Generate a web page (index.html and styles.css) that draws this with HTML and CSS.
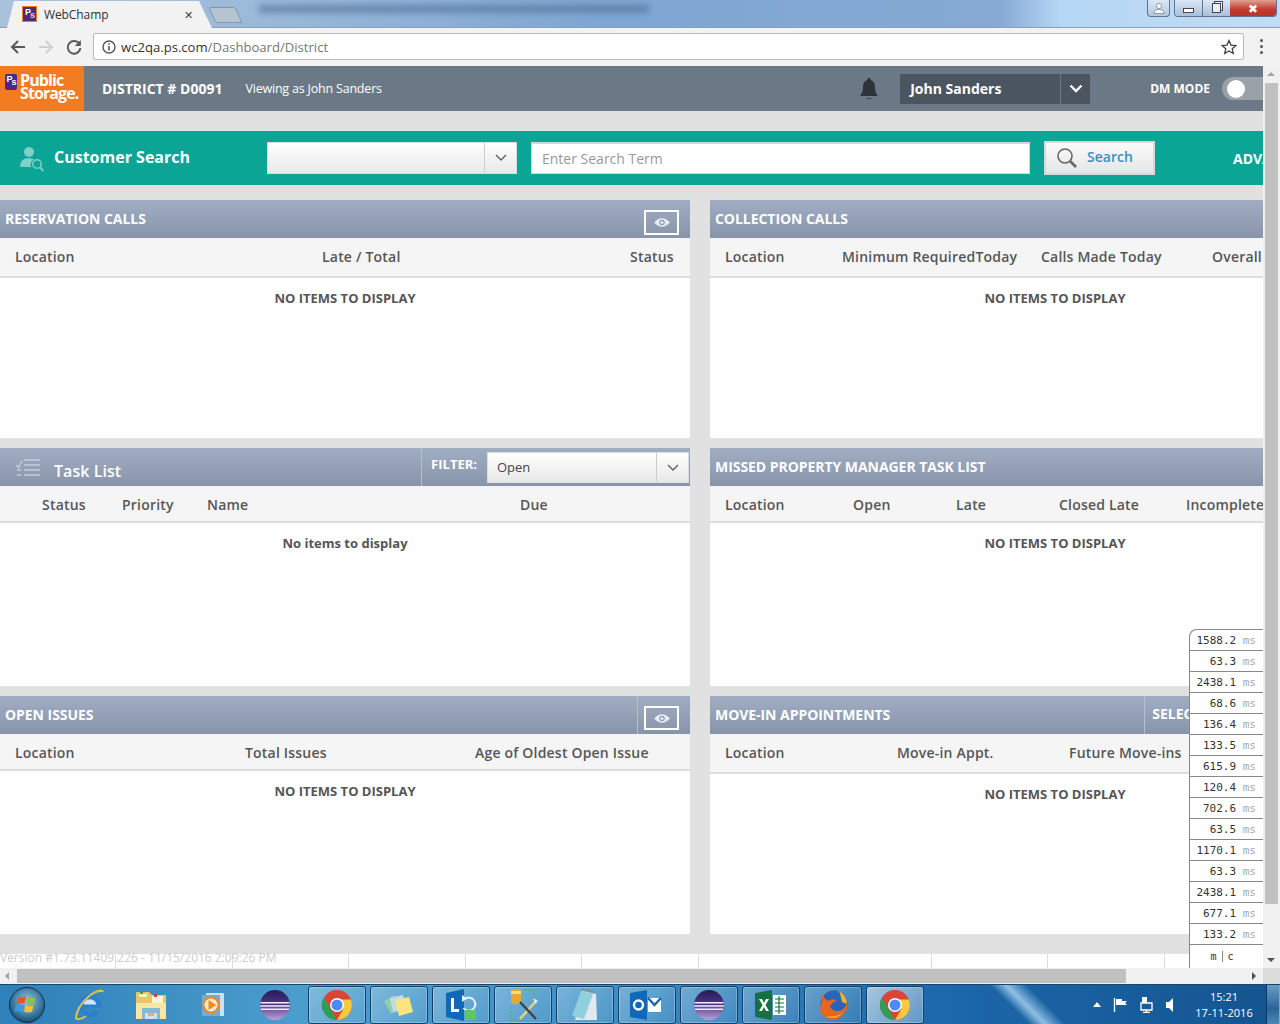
FILE: index.html
```html
<!DOCTYPE html>
<html lang="en">
<head>
    <meta charset="utf-8" />
    <title>WebChamp</title>
    <link rel="stylesheet" href="styles.css">
</head>
<body>
    <svg class="defs" width="0" height="0">
        <defs>
            <linearGradient id="gr-eclipse" x1="0" y1="0" x2="0" y2="1">
                <stop offset="0" stop-color="#2a1a55" />
                <stop offset=".45" stop-color="#4a3285" />
                <stop offset="1" stop-color="#b9a3d8" />
            </linearGradient>
            <radialGradient id="gr-orb" cx=".5" cy=".4" r=".65">
                <stop offset="0" stop-color="#9fc8de" />
                <stop offset=".7" stop-color="#2f6f98" />
                <stop offset="1" stop-color="#123c5c" />
            </radialGradient>
        </defs>
        <symbol id="ic-chrome" viewBox="0 0 32 32">
            <circle cx="16" cy="16" r="15" fill="#db4437" />
            <path d="M3 8.500 L10 20.500 L16 31 A15 15 0 0 1 3 8.500Z" fill="#2f9e56" />
            <path d="M29.900 10.500 A15 15 0 0 1 16 31 L22.500 19.700 L16 10.500Z" fill="#fbc93e" />
            <circle cx="16" cy="16" r="7" fill="#fff" />
            <circle cx="16" cy="16" r="5.500" fill="#4c8bf5" />
        </symbol>
        <symbol id="ic-eclipse" viewBox="0 0 32 32">
            <circle cx="16" cy="16" r="15" fill="url(#gr-eclipse)" />
            <path d="M1.500 13h29v1.400h-29zM1.200 16.300h29.600v1.400H1.200zM2 19.600h28V21H2z" fill="#f3eef8" />
        </symbol>
    </svg>

    <div class="titlebar">
        <div class="tab">
            <span class="fav">P<i>s</i></span>
            <span class="tab_name">WebChamp</span>
            <span class="tab_x">&#x2715;</span>
        </div>
        <div class="tab_new"></div>
        <div class="title_blur"></div>
        <div class="win_user">
            <svg width="12" height="11" viewBox="0 0 12 11"><circle cx="6" cy="3" r="2.600" fill="#fff" stroke="#567" stroke-width=".6" /><path d="M1 10.500q0-4 5-4t5 4Z" fill="#fff" stroke="#567" stroke-width=".6" /></svg>
        </div>
        <div class="win_btns">
            <div class="win_btn win_min"><span></span></div>
            <div class="win_btn win_max"><span></span></div>
            <div class="win_btn win_close">&#x2716;</div>
        </div>
    </div>

    <div class="toolbar">
        <svg class="nav" width="18" height="18" viewBox="0 0 18 18"><path d="M16 9H3M9 3L3 9l6 6" fill="none" stroke="#5a5a5a" stroke-width="2" /></svg>
        <svg class="nav" width="18" height="18" viewBox="0 0 18 18"><path d="M2 9h13M9 3l6 6-6 6" fill="none" stroke="#cfcfcf" stroke-width="2" /></svg>
        <svg class="nav" width="18" height="18" viewBox="0 0 18 18"><path d="M14.500 6.200A6.300 6.300 0 1 0 15.300 10" fill="none" stroke="#5a5a5a" stroke-width="2" /><path d="M15.800 2v6h-6z" fill="#5a5a5a" /></svg>
        <div class="omnibox">
            <svg width="14" height="14" viewBox="0 0 14 14"><circle cx="7" cy="7" r="6" fill="none" stroke="#555" stroke-width="1.400" /><path d="M7 6v4.500M7 3.300v1.500" stroke="#555" stroke-width="1.600" /></svg>
            <span class="url">wc2qa.ps.com<span class="url_path">/Dashboard/District</span></span>
            <svg class="star" width="16" height="16" viewBox="0 0 16 16"><path d="M8 1.500l2 4.600 4.900.4-3.700 3.200 1.100 4.800L8 12l-4.300 2.500 1.100-4.800L1.100 6.500 6 6.100Z" fill="none" stroke="#444" stroke-width="1.300" /></svg>
        </div>
        <div class="dots"><i></i><i></i><i></i></div>
    </div>

    <div class="viewport">
        <div class="page">
            <div class="topbar">
                <div class="logo">
                    <span class="logo_ps">P<i>s</i></span>
                    <span class="logo_text">Public<br />Storage.</span>
                </div>
                <span class="district">DISTRICT # D0091</span>
                <span class="viewing">Viewing as John Sanders</span>
                <svg class="bell" width="20" height="24" viewBox="0 0 20 24"><path d="M10 1a1.600 1.600 0 0 1 1.600 2C15 4 16 7 16 11c0 4 1.500 6 3 8H1c1.500-2 3-4 3-8 0-4 1-7 4.400-8A1.600 1.600 0 0 1 10 1Z" fill="#2d3338" /><path d="M7 21h6q-3 2-6 0Z" fill="#2d3338" /></svg>
                <div class="user_menu">
                    <span class="user_name">John Sanders</span>
                    <span class="user_arrow"><svg width="14" height="9" viewBox="0 0 14 9"><path d="M1.500 1.500L7 7l5.500-5.500" fill="none" stroke="#fff" stroke-width="2.400" /></svg></span>
                </div>
                <span class="dm_mode">DM MODE</span>
                <div class="toggle"><span></span></div>
            </div>

            <div class="search_bar">
                <svg class="search_icon" width="25" height="26" viewBox="0 0 25 26"><circle cx="9" cy="6" r="5" fill="#7fd0c6" /><path d="M0 21q0-9 9-9 3 0 5 1.500A6 6 0 0 0 11 21Z" fill="#7fd0c6" /><circle cx="17" cy="18" r="4.300" fill="none" stroke="#7fd0c6" stroke-width="1.500" /><path d="M20 21.500l3.500 3.500" stroke="#7fd0c6" stroke-width="2" /></svg>
                <span class="search_title">Customer Search</span>
                <div class="select search_select">
                    <span class="select_val"></span>
                    <span class="select_arrow"><svg width="12" height="8" viewBox="0 0 12 8"><path d="M1 1l5 5 5-5" fill="none" stroke="#666" stroke-width="1.500" /></svg></span>
                </div>
                <div class="search_input">Enter Search Term</div>
                <div class="search_btn">
                    <svg width="22" height="22" viewBox="0 0 22 22"><circle cx="9" cy="9" r="7" fill="none" stroke="#666" stroke-width="1.600" /><path d="M14 14l6 6" stroke="#666" stroke-width="2.600" /></svg>
                    <span>Search</span>
                </div>
                <span class="adv">ADVANCED SEARCH</span>
            </div>

            <div class="panels">
                <section class="panel">
                    <div class="panel_head">
                        <span class="panel_title">RESERVATION CALLS</span>
                        <div class="eye_box"><svg width="16" height="11" viewBox="0 0 16 11"><path d="M0 5.500Q8-3 16 5.500 8 14 0 5.500Z" fill="#e8ecf2" /><circle cx="8" cy="5.500" r="2.800" fill="#8f9cb2" /><circle cx="8" cy="5.500" r="1.500" fill="#e8ecf2" /></svg></div>
                    </div>
                    <div class="cols cols_res"><span>Location</span><span>Late / Total</span><span>Status</span></div>
                    <div class="empty">NO ITEMS TO DISPLAY</div>
                </section>

                <section class="panel">
                    <div class="panel_head"><span class="panel_title">COLLECTION CALLS</span></div>
                    <div class="cols cols_coll"><span>Location</span><span>Minimum RequiredToday</span><span>Calls Made Today</span><span>Overall</span></div>
                    <div class="empty">NO ITEMS TO DISPLAY</div>
                </section>

                <section class="panel">
                    <div class="panel_head">
                        <svg class="task_icon" width="24" height="18" viewBox="0 0 24 18"><path d="M8 2h16M8 7h16M8 12h16M8 17h16" stroke="#c5cedb" stroke-width="1.400" /><path d="M0 7l2.500 2.500L6 3" fill="none" stroke="#c5cedb" stroke-width="1.400" /><path d="M1 12h4M1 17h4" stroke="#c5cedb" stroke-width="1.400" /></svg>
                        <span class="task_title">Task List</span>
                        <div class="filter">
                            <span class="filter_label">FILTER:</span>
                            <div class="select filter_select">
                                <span class="select_val">Open</span>
                                <span class="select_arrow"><svg width="12" height="8" viewBox="0 0 12 8"><path d="M1 1l5 5 5-5" fill="none" stroke="#666" stroke-width="1.500" /></svg></span>
                            </div>
                        </div>
                    </div>
                    <div class="cols cols_task short"><span>Status</span><span>Priority</span><span>Name</span><span>Due</span></div>
                    <div class="empty">No items to display</div>
                </section>

                <section class="panel">
                    <div class="panel_head"><span class="panel_title">MISSED PROPERTY MANAGER TASK LIST</span></div>
                    <div class="cols cols_missed short"><span>Location</span><span>Open</span><span>Late</span><span>Closed Late</span><span>Incomplete</span></div>
                    <div class="empty">NO ITEMS TO DISPLAY</div>
                </section>

                <section class="panel">
                    <div class="panel_head">
                        <span class="panel_title">OPEN ISSUES</span>
                        <div class="eye_sep">
                            <div class="eye_box"><svg width="16" height="11" viewBox="0 0 16 11"><path d="M0 5.500Q8-3 16 5.500 8 14 0 5.500Z" fill="#e8ecf2" /><circle cx="8" cy="5.500" r="2.800" fill="#8f9cb2" /><circle cx="8" cy="5.500" r="1.500" fill="#e8ecf2" /></svg></div>
                        </div>
                    </div>
                    <div class="cols cols_open short"><span>Location</span><span>Total Issues</span><span>Age of Oldest Open Issue</span></div>
                    <div class="empty">NO ITEMS TO DISPLAY</div>
                </section>

                <section class="panel">
                    <div class="panel_head">
                        <span class="panel_title">MOVE-IN APPOINTMENTS</span>
                        <span class="select_link">SELECT</span>
                    </div>
                    <div class="cols cols_movein"><span>Location</span><span>Move-in Appt.</span><span>Future Move-ins</span></div>
                    <div class="empty">NO ITEMS TO DISPLAY</div>
                </section>
            </div>

            <div class="footer_strip"></div>
            <div class="version">Version #1.73.11409.226 - 11/15/2016 2:09:26 PM</div>

            <div class="profiler">
                <div class="prof_row">1588.2 <em>ms</em></div>
                <div class="prof_row">63.3 <em>ms</em></div>
                <div class="prof_row">2438.1 <em>ms</em></div>
                <div class="prof_row">68.6 <em>ms</em></div>
                <div class="prof_row">136.4 <em>ms</em></div>
                <div class="prof_row">133.5 <em>ms</em></div>
                <div class="prof_row">615.9 <em>ms</em></div>
                <div class="prof_row">120.4 <em>ms</em></div>
                <div class="prof_row">702.6 <em>ms</em></div>
                <div class="prof_row">63.5 <em>ms</em></div>
                <div class="prof_row">1170.1 <em>ms</em></div>
                <div class="prof_row">63.3 <em>ms</em></div>
                <div class="prof_row">2438.1 <em>ms</em></div>
                <div class="prof_row">677.1 <em>ms</em></div>
                <div class="prof_row">133.2 <em>ms</em></div>
                <div class="prof_foot"><span>m</span><span>c</span></div>
            </div>
        </div>

        <div class="vscroll">
            <span class="arrow_up"></span>
            <div class="vthumb"></div>
            <span class="arrow_down"></span>
        </div>
    </div>

    <div class="hscroll">
        <span class="arrow_left"></span>
        <div class="hthumb"></div>
        <span class="arrow_right"></span>
        <div class="corner"></div>
    </div>

    <div class="taskbar">
        <div class="orb">
            <svg width="36" height="36" viewBox="0 0 36 36"><circle cx="18" cy="18" r="17.500" fill="url(#gr-orb)" stroke="#0e2f4a" /><path d="M9 11q4-2 8-1l-1.500 6.500q-4-1-8 .5Z" fill="#e8552b" /><path d="M18.500 10.500q4 1.500 8 0l-1.500 6.500q-4 1-8-.5Z" fill="#8cc63f" /><path d="M7 18.500q4-1.500 8-.5l-1.500 6.500q-4-1-8 .5Z" fill="#3b9ae0" /><path d="M16.500 18.500q4 1.500 8 0L23 25q-4 1-8-.5Z" fill="#fbc02d" /></svg>
        </div>
        <div class="quick">
            <svg width="34" height="34" viewBox="0 0 34 34"><path d="M9 17a9 9 0 0 1 18 0Z" fill="#cfe6f7" /><circle cx="18" cy="18" r="9" fill="none" stroke="#2a7fd0" stroke-width="4.500" stroke-dasharray="50.500 6" stroke-dashoffset="-6" /><path d="M9 16.500h19v3H9z" fill="#2a7fd0" /><path d="M30 3C23 1 6 15 4 29c-.5 3 5 3 10-1" fill="none" stroke="#dcbf58" stroke-width="2" /><path d="M24 4q6-3 7 0" fill="none" stroke="#dcbf58" stroke-width="2" /></svg>
        </div>
        <div class="quick">
            <svg width="34" height="32" viewBox="0 0 34 32"><path d="M2 3h13l3 3h14v24H2Z" fill="#e8c766" /><path d="M5 5h8v3H5zM18 7h11v7H18z" fill="#fbf3cf" /><path d="M6 2h3v3H6z" fill="#4a9a4a" /><path d="M20 5h3v3h-3z" fill="#c8473a" /><path d="M2 14h30v16H2z" fill="#f7e7a5" /><path d="M8 19h18v11H8z" fill="#8ab8d2" /><path d="M11 24h12v6H11z" fill="#cfe2ee" /><path d="M14 24h6v3h-6z" fill="#e5b548" /></svg>
        </div>
        <div class="quick">
            <svg width="26" height="30" viewBox="0 0 26 30"><path d="M6 3h18v23H6z" fill="#cfe0ee" /><path d="M2 5h18v21H2z" fill="#7aa9cc" /><circle cx="11" cy="15" r="8.500" fill="#ee8a22" /><circle cx="11" cy="15" r="6.500" fill="#fbead6" /><path d="M8.500 10l8 5-8 5Z" fill="#ee8a22" /></svg>
        </div>
        <div class="quick"><svg width="32" height="32"><use href="#ic-eclipse" /></svg></div>
        <div class="task_btn"><svg width="32" height="32"><use href="#ic-chrome" /></svg></div>
        <div class="task_btn">
            <svg width="32" height="28" viewBox="0 0 32 28"><path d="M1 10l11-6 6 13-10 6Z" fill="#8fd0a6" /><path d="M7 7l13-3 3 15-13 2Z" fill="#bfdcea" /><path d="M12 9l14-3 4 15-14 4Z" fill="#fde47e" /></svg>
        </div>
        <div class="task_btn">
            <svg width="34" height="34" viewBox="0 0 34 34"><path d="M2 5l18-4v32L2 29Z" fill="#0f68b8" /><path d="M7 10h3v11h5v3H7z" fill="#fff" /><path d="M21 11a6.500 6.500 0 1 1-1.500 9" fill="none" stroke="#e8f2fa" stroke-width="2" /><path d="M18 7l5 3.500-5 3.500z" fill="#e8f2fa" /><rect x="21" y="22" width="11" height="10" fill="#5cc95c" /></svg>
        </div>
        <div class="task_btn">
            <svg width="34" height="34" viewBox="0 0 34 34"><rect x="5" y="1" width="10" height="15" rx="2" fill="#e8a82c" /><path d="M5 3h10v3H5z" fill="#f7dc7a" /><path d="M5 19v13M5 32h12M19 2h9v8" fill="none" stroke="#5ab34a" stroke-width="1.500" stroke-dasharray="2 2" /><path d="M14 31L30 13" stroke="#e8d080" stroke-width="2.400" /><path d="M14 14l16 17" stroke="#444" stroke-width="2.400" /><path d="M27 10l5 3-3 3Z" fill="#e8e8e8" /></svg>
        </div>
        <div class="task_btn">
            <svg width="30" height="34" viewBox="0 0 30 34"><path d="M12 3l14 3 1 26H5Z" fill="#dfe9ef" /><path d="M11 3L2 28l12 3 9-25Z" fill="#8fd0dc" /><path d="M12 1l13 3" stroke="#888" stroke-width="2" stroke-dasharray="2 1" /></svg>
        </div>
        <div class="task_btn">
            <svg width="34" height="32" viewBox="0 0 34 32"><path d="M0 4l17-3v30L0 28Z" fill="#0f68b8" /><circle cx="8.500" cy="16" r="4.500" fill="none" stroke="#fff" stroke-width="2.400" /><rect x="18" y="9" width="13" height="14" fill="#fff" /><path d="M18 9l6.500 7L31 9" fill="none" stroke="#0f68b8" stroke-width="2.400" /></svg>
        </div>
        <div class="task_btn"><svg width="32" height="32"><use href="#ic-eclipse" /></svg></div>
        <div class="task_btn">
            <svg width="32" height="32" viewBox="0 0 32 32"><path d="M0 4l17-3v30L0 28Z" fill="#17703f" /><path d="M4 10h3l2 4 2-4h3l-3.500 6 3.500 6h-3l-2-4-2 4H4l3.500-6Z" fill="#fff" /><rect x="18" y="6" width="13" height="20" fill="#fff" /><path d="M20 10h9M20 14h9M20 18h9M20 22h9M24 7v18" stroke="#17703f" stroke-width="1.200" /></svg>
        </div>
        <div class="task_btn">
            <svg width="32" height="32" viewBox="0 0 32 32"><circle cx="17" cy="15" r="13.500" fill="#2a64b8" /><path d="M22 2q8 5 8 13l-5-2q-1-6-3-11Z" fill="#f4b32a" /><path d="M5 4q-1 5 0 8-5 11 3 16 10 6 18-2 5-5 4-12-3 8-9 8-7 0-8-5 3-4 7-6-6-2-9 1-4-2-6-8Z" fill="#e8661f" /><path d="M8 27q10 5 18-3-8 5-18 3Z" fill="#f6b52a" /></svg>
        </div>
        <div class="task_btn task_on"><svg width="32" height="32"><use href="#ic-chrome" /></svg></div>
        <div class="tray">
            <svg width="8" height="5" viewBox="0 0 8 5"><path d="M0 5l4-5 4 5Z" fill="#fff" /></svg>
            <svg width="14" height="14" viewBox="0 0 14 14"><path d="M1.500 0v14" stroke="#fff" stroke-width="1.400" /><path d="M3 1h6v6H3zM9 3h5l-2 2 2 2H9Z" fill="#fff" /></svg>
            <svg width="15" height="16" viewBox="0 0 15 16"><path d="M2 6h11v7H2zM7.500 13v3M4 15.500h7" fill="none" stroke="#fff" stroke-width="1.300" /><rect x="3" y="0" width="5" height="6" fill="#fff" /></svg>
            <svg width="8" height="14" viewBox="0 0 8 14"><path d="M7 0v14L3 10H0V4h3Z" fill="#fff" /></svg>
        </div>
        <div class="clock"><span>15:21</span><span>17-11-2016</span></div>
        <div class="show_desktop"></div>
    </div>
</body>
</html>
```

FILE: styles.css
```css
* {
    box-sizing: border-box;
}

html,
body {
    margin: 0;
    height: 1024px;
    overflow: hidden;
}

body {
    width: 1280px;
    font: 14px "Open Sans", sans-serif;
    background-color: #e1e1e1;
}

.defs {
    position: absolute;
}

/* browser frame */
.titlebar {
    height: 28px;
    display: flex;
    background: linear-gradient(to right, #a8c2db 0, #9dbbd9 220px, #7ea6d2 600px, #86aad4 1000px, #b5d6f5 1060px, #c2dcf4 1280px);
    border-bottom: 1px solid #8aa0b8;
    position: relative;
}

.tab {
    width: 205px;
    height: 28px;
    margin-left: 7px;
    padding: 6px 0 0 15px;
    display: flex;
    align-items: flex-start;
    gap: 7px;
    background-color: #f2f2f2;
    clip-path: polygon(0 100%, 7px 1px, 192px 1px, 205px 100%);
    flex-shrink: 0;
    z-index: 1;
}

.fav {
    width: 15px;
    height: 16px;
    background-color: #4b2a7f;
    border: 1px solid #f47b20;
    color: #fff;
    font: bold 9px/11px "Liberation Sans", sans-serif;
    text-align: center;
    letter-spacing: -1px;
}

.fav i {
    font-style: normal;
    vertical-align: -3px;
    color: #f7c9a8;
}

.tab_name {
    width: 133px;
    font: 12px/18px "Open Sans", sans-serif;
    letter-spacing: -.1px;
    color: #333;
}

.tab_x {
    font-size: 11px;
    line-height: 18px;
    color: #444;
}

.tab_new {
    width: 27px;
    height: 16px;
    margin: 7px 0 0 0;
    background-color: #b6c4d2;
    border: 1px solid #8897a8;
    transform: skewX(25deg);
    border-radius: 2px;
}

.title_blur {
    width: 390px;
    height: 8px;
    margin: 5px 0 0 20px;
    background-color: #4f6c92;
    filter: blur(3px);
    opacity: .6;
}

.win_user {
    position: absolute;
    left: 1147px;
    top: 0;
    width: 23px;
    height: 17px;
    border: 1px solid #60758c;
    border-top: 0;
    border-radius: 0 0 4px 4px;
    background: linear-gradient(#dce8f4, #b3c8de);
    display: flex;
    justify-content: center;
    align-items: center;
}

.win_btns {
    position: absolute;
    left: 1174px;
    top: 0;
    height: 17px;
    display: flex;
    border: 1px solid #60758c;
    border-top: 0;
    border-radius: 0 0 4px 4px;
    overflow: hidden;
}

.win_btn {
    display: flex;
    justify-content: center;
    align-items: center;
}

.win_min {
    width: 28px;
    background: linear-gradient(#dce8f4, #a9c0d8);
    border-right: 1px solid #60758c;
}

.win_min span {
    width: 11px;
    height: 5px;
    margin-top: 4px;
    background-color: #fff;
    border: 1px solid #445;
}

.win_max {
    width: 27px;
    background: linear-gradient(#dce8f4, #a9c0d8);
}

.win_max span {
    width: 9px;
    height: 10px;
    background-color: #e8eef5;
    border: 1px solid #445;
    box-shadow: 2px -2px 0 -1px #e8eef5, 2px -2px 0 0 #445;
}

.win_close {
    width: 46px;
    background: linear-gradient(#e0a090, #c23a2e 60%, #b8332a);
    color: #fff;
    font-size: 12px;
}

.toolbar {
    height: 38px;
    padding: 5px 0 6px 9px;
    display: flex;
    align-items: center;
    background-color: #f2f2f2;
}

.nav {
    margin-right: 10px;
}

.omnibox {
    width: 1151px;
    height: 27px;
    padding: 0 6px 0 8px;
    display: flex;
    align-items: center;
    gap: 5px;
    background-color: #fff;
    border: 1px solid #b9b9b9;
    border-radius: 2px;
}

.url {
    font-size: 13.100px;
    color: #333;
}

.url_path {
    color: #777;
}

.star {
    margin-left: auto;
}

.dots {
    margin-left: 16px;
    display: flex;
    flex-direction: column;
    gap: 3px;
}

.dots i {
    width: 3px;
    height: 3px;
    background-color: #555;
    border-radius: 50%;
}

.viewport {
    height: 902px;
    display: flex;
}

.page {
    width: 1263px;
    height: 902px;
    position: relative;
    overflow: hidden;
    background-color: #e1e1e1;
}

/* top bar */
.topbar {
    height: 45px;
    display: flex;
    align-items: center;
    background-color: #6b7986;
    color: #fff;
}

.logo {
    width: 84px;
    height: 45px;
    padding: 8px 0 0 5px;
    display: flex;
    gap: 3px;
    background-color: #f47b20;
}

.logo_ps {
    width: 12px;
    height: 16px;
    background-color: #4b2a7f;
    border-radius: 2px;
    font: bold 9px/11px "Liberation Sans", sans-serif;
    letter-spacing: -1px;
    text-align: center;
}

.logo_ps i {
    font-style: normal;
    vertical-align: -3px;
}

.logo_text {
    font: bold 16px/13px "Open Sans", sans-serif;
    letter-spacing: -.9px;
}

.district {
    margin-left: 18px;
    font-size: 14px;
    font-weight: 700;
}

.viewing {
    margin-left: 23px;
    font-size: 12.500px;
    letter-spacing: -.2px;
}

.bell {
    margin-left: auto;
}

.user_menu {
    width: 190px;
    height: 30px;
    margin: 0 0 0 21px;
    display: flex;
    background-color: #4a555f;
}

.user_name {
    flex: 1;
    padding-left: 10px;
    font-size: 14px;
    font-weight: 700;
    line-height: 30px;
}

.user_arrow {
    width: 30px;
    display: flex;
    justify-content: center;
    align-items: center;
    border-left: 1px solid #6b7986;
}

.dm_mode {
    margin-left: 60px;
    font-size: 12px;
    font-weight: 700;
}

.toggle {
    width: 41px;
    height: 23px;
    margin-left: 12px;
    padding: 3px 0 0 5px;
    border-radius: 12px 0 0 12px;
    background-color: #9aa2a9;
}

.toggle span {
    display: block;
    width: 18px;
    height: 18px;
    border-radius: 50%;
    background-color: #fff;
}

/* customer search */
.search_bar {
    height: 54px;
    margin-top: 20px;
    display: flex;
    align-items: center;
    overflow: hidden;
    background-color: #0aa595;
    color: #fff;
}

.search_icon {
    margin: 2px 0 0 20px;
    flex-shrink: 0;
}

.search_title {
    width: 213px;
    margin: -2px 0 0 9px;
    font-size: 16px;
    font-weight: 700;
    flex-shrink: 0;
}

.select {
    display: flex;
    border: 1px solid #ddd;
    background: linear-gradient(#fff, #e8e8e8);
    color: #444;
    flex-shrink: 0;
}

.select_val {
    flex: 1;
    padding-left: 9px;
    font-size: 13px;
    line-height: 29px;
}

.select_arrow {
    width: 32px;
    display: flex;
    justify-content: center;
    align-items: center;
    border-left: 1px solid #ccc;
}

.search_select {
    width: 250px;
    height: 32px;
}

.search_input {
    width: 499px;
    height: 32px;
    margin-left: 14px;
    padding-left: 10px;
    background-color: #fff;
    border: 2px solid #d5d5d5;
    border-width: 2px 1px 1px 1px;
    color: #999;
    font-size: 14px;
    line-height: 29px;
    flex-shrink: 0;
}

.search_btn {
    width: 111px;
    height: 34px;
    margin-left: 14px;
    padding-left: 10px;
    display: flex;
    align-items: center;
    gap: 9px;
    background: linear-gradient(#fafafa, #e6e6e6);
    border: 2px solid #d8d8d8;
    color: #3a8fc0;
    font-size: 14px;
    font-weight: 600;
    flex-shrink: 0;
}

.search_btn span {
    margin-top: -3px;
}

.adv {
    margin-left: 78px;
    font-size: 14px;
    font-weight: 700;
    white-space: nowrap;
}

/* panels */
.panels {
    width: 1400px;
    margin-top: 15px;
    display: grid;
    grid-template-columns: 690px 690px;
    grid-auto-rows: 238px;
    gap: 10px 20px;
}

.panel {
    background-color: #fff;
}

.panel_head {
    height: 38px;
    padding-left: 5px;
    display: flex;
    align-items: center;
    background: linear-gradient(#a0adc2, #8794aa);
    color: #fff;
}

.panel_title {
    margin-top: -2px;
    font-size: 14px;
    font-weight: 700;
    letter-spacing: -.05px;
}

.eye_box {
    width: 35px;
    height: 25px;
    margin: 6px 0 0 auto;
    display: flex;
    justify-content: center;
    align-items: center;
    border: 2px solid #fff;
}

.panel_head > .eye_box {
    margin-right: 11px;
}

.eye_sep {
    height: 38px;
    margin-left: auto;
    padding: 0 11px 0 6px;
    display: flex;
    align-items: center;
    border-left: 1px solid #b4bfd0;
}

.eye_sep .eye_box {
    margin: 6px 0 0;
    height: 24px;
}

.task_icon {
    margin-left: 11px;
    flex-shrink: 0;
}

.task_title {
    margin: 8px 0 0 14px;
    font-size: 16px;
    font-weight: 600;
    letter-spacing: .05px;
}

.filter {
    height: 38px;
    margin-left: auto;
    padding: 4px 1px 3px 9px;
    display: flex;
    gap: 10px;
    border-left: 1px solid #b4bfd0;
}

.filter_label {
    font-size: 13px;
    font-weight: 700;
    line-height: 24px;
}

.filter_select {
    width: 202px;
}

.select_link {
    height: 38px;
    margin-left: 254px;
    padding-left: 7px;
    border-left: 1px solid #b4bfd0;
    font-size: 14px;
    font-weight: 700;
    line-height: 36px;
}

.cols {
    height: 40px;
    padding-left: 15px;
    padding-bottom: 2px;
    display: grid;
    align-items: center;
    background-color: #f5f5f5;
    border-bottom: 2px solid #ddd;
    color: #555;
    font-size: 14px;
    font-weight: 600;
    letter-spacing: .2px;
    white-space: nowrap;
}

.cols.short {
    height: 37px;
    padding-bottom: 0;
    padding-top: 2px;
}

.cols_res {
    grid-template-columns: 307px 308px auto;
}

.cols_coll {
    grid-template-columns: 117px 199px 171px auto;
}

.cols_task {
    padding-left: 42px;
    grid-template-columns: 80px 85px 313px auto;
}

.cols_missed {
    grid-template-columns: 128px 103px 103px 127px auto;
}

.cols_open {
    grid-template-columns: 230px 230px auto;
}

.cols_movein {
    grid-template-columns: 172px 172px auto;
}

.empty {
    padding-top: 10px;
    text-align: center;
    color: #555;
    font-size: 13px;
    font-weight: 700;
    line-height: 20px;
}

.footer_strip {
    height: 14px;
    margin-top: 20px;
    background-color: #fff;
    background-image: repeating-linear-gradient(to right, transparent 0, transparent 115.500px, #ddd 115.500px, #ddd 116.500px);
}

.version {
    position: absolute;
    left: 0;
    bottom: 2px;
    font-size: 12px;
    color: #ccc;
}

/* timing list */
.profiler {
    position: absolute;
    left: 1189px;
    top: 563px;
    width: 74px;
    background-color: #fff;
    border-left: 1px solid #888;
    border-top: 1px solid #888;
    border-top-left-radius: 8px;
    font: 11px "DejaVu Sans Mono", monospace;
    color: #333;
}

.prof_row {
    height: 21px;
    padding-right: 7px;
    text-align: right;
    line-height: 22px;
    border-bottom: 1px solid #888;
}

.prof_row em {
    font-style: normal;
    color: #aaa;
}

.prof_foot {
    height: 23px;
    padding-right: 9px;
    display: flex;
    justify-content: center;
    align-items: center;
    gap: 5px;
    font-size: 10px;
}

.prof_foot span + span {
    padding-left: 5px;
    border-left: 1px solid #888;
}

/* scrollbars */
.vscroll {
    width: 17px;
    height: 902px;
    padding-top: 17px;
    position: relative;
    background-color: #f1f1f1;
}

.vthumb {
    width: 13px;
    height: 821px;
    margin-left: 2px;
    background-color: #c1c1c1;
}

.arrow_up,
.arrow_down {
    position: absolute;
    left: 4px;
    width: 0;
    height: 0;
    border-left: 4px solid transparent;
    border-right: 4px solid transparent;
}

.arrow_up {
    top: 6px;
    border-bottom: 4px solid #a3a3a3;
}

.arrow_down {
    bottom: 6px;
    border-top: 4px solid #505050;
}

.hscroll {
    height: 16px;
    padding-left: 17px;
    position: relative;
    background-color: #f1f1f1;
}

.hthumb {
    width: 1109px;
    height: 14px;
    margin-top: 1px;
    background-color: #c1c1c1;
    float: left;
}

.arrow_left,
.arrow_right {
    position: absolute;
    top: 4px;
    width: 0;
    height: 0;
    border-top: 4px solid transparent;
    border-bottom: 4px solid transparent;
}

.arrow_left {
    left: 5px;
    border-right: 4px solid #a3a3a3;
}

.arrow_right {
    left: 1252px;
    border-left: 4px solid #505050;
}

.corner {
    position: absolute;
    right: 0;
    top: 0;
    width: 17px;
    height: 16px;
    background-color: #dcdcdc;
}

/* windows taskbar */
.taskbar {
    height: 40px;
    display: flex;
    align-items: center;
    border-top: 1px solid #17466e;
    background:
        linear-gradient(45deg, transparent 78%, #8fc0e2 79.200%, transparent 80.800%),
        linear-gradient(to right, #2f7fb8 0, #4a9dcd 300px, #3d8fc6 600px, #1c68ab 940px, #14548f 1280px);
    color: #fff;
}

.orb {
    width: 58px;
    height: 39px;
    padding-left: 9px;
    display: flex;
    align-items: center;
    flex-shrink: 0;
}

.quick {
    width: 62px;
    height: 39px;
    display: flex;
    justify-content: center;
    align-items: center;
    flex-shrink: 0;
}

.task_btn {
    width: 58px;
    height: 38px;
    margin: 0 2px;
    display: flex;
    justify-content: center;
    align-items: center;
    flex-shrink: 0;
    border: 1px solid #12406a;
    border-radius: 3px;
    background: linear-gradient(135deg, rgba(255, 255, 255, .3), rgba(255, 255, 255, .08));
    box-shadow: inset 0 0 0 1px rgba(255, 255, 255, .25);
}

.task_on {
    background: linear-gradient(135deg, rgba(255, 255, 255, .6), rgba(255, 255, 255, .3));
}

.tray {
    margin-left: 167px;
    display: flex;
    align-items: center;
    gap: 12px;
    flex-shrink: 0;
}

.clock {
    width: 84px;
    margin-left: 8px;
    display: flex;
    flex-direction: column;
    align-items: center;
    font-size: 11px;
    line-height: 16px;
    flex-shrink: 0;
}

.show_desktop {
    width: 14px;
    height: 39px;
    margin-left: auto;
    background: linear-gradient(#6a9cc2, #2a659a 60%, #4d86b4);
    border-left: 1px solid #0f3a5c;
    border-right: 1px solid #7fa8c8;
}
```
